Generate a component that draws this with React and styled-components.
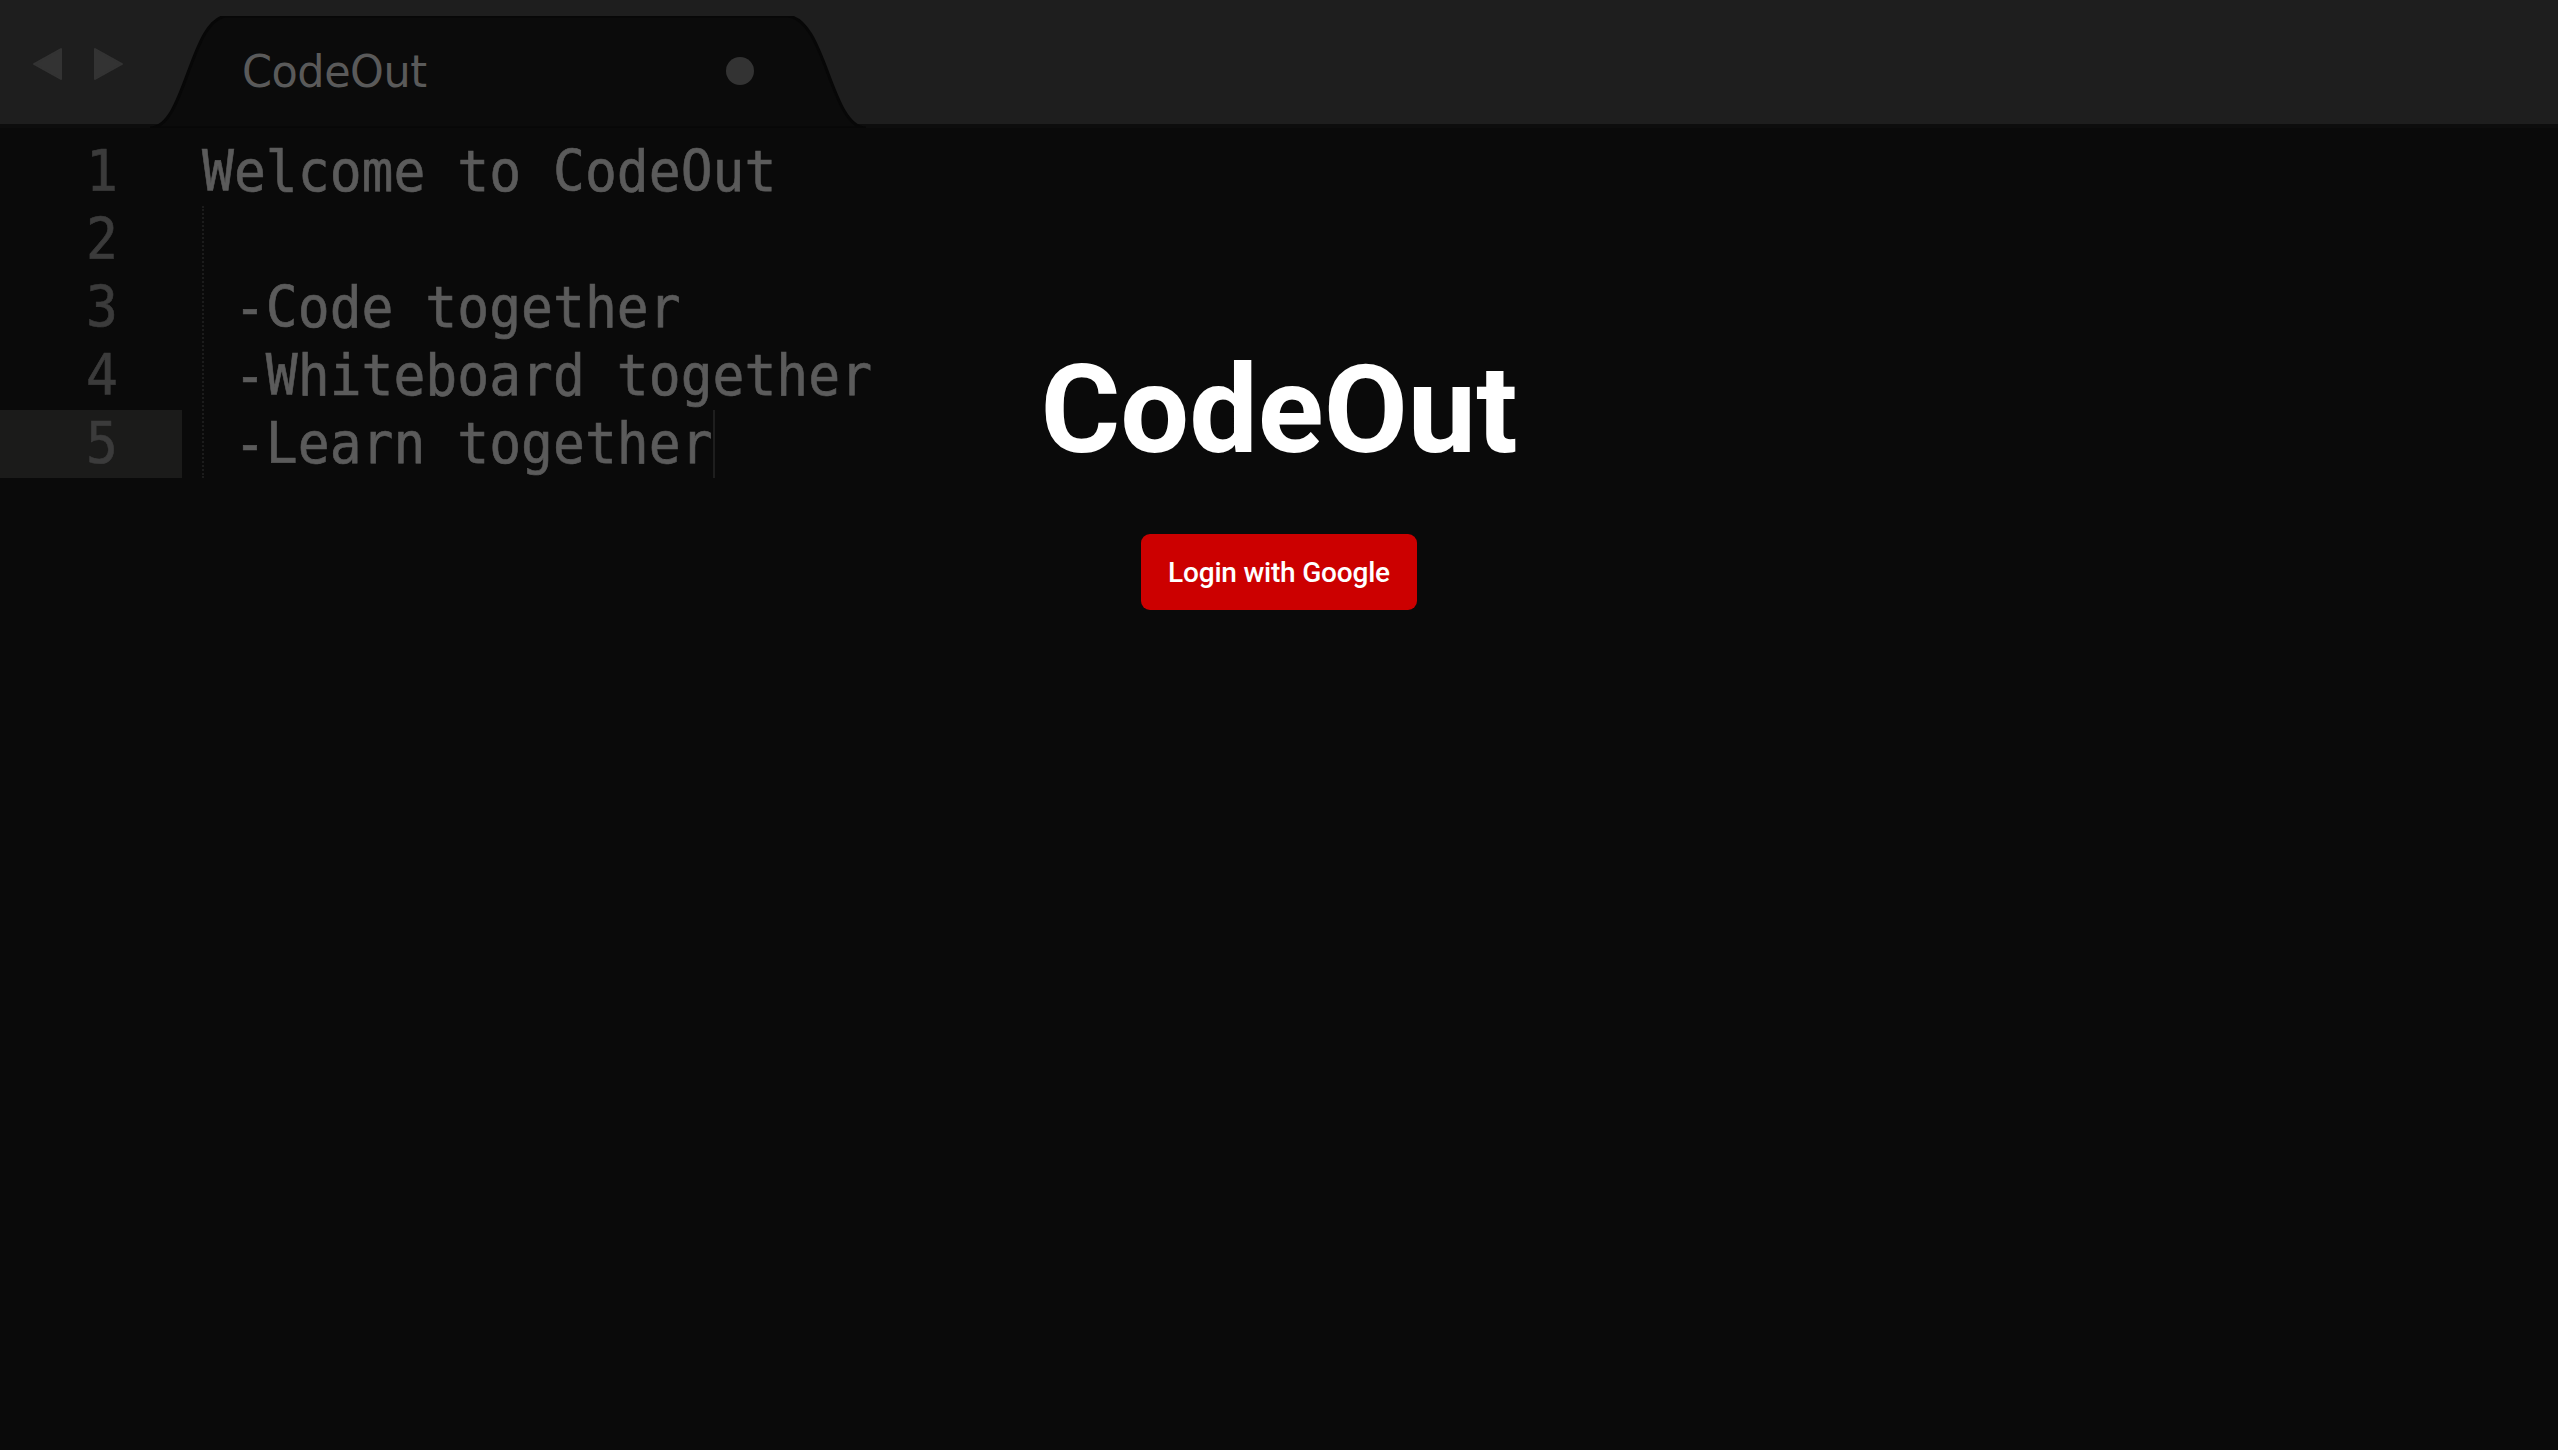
import styled, { createGlobalStyle } from 'styled-components';

const lines = ['Welcome to CodeOut', '', ' -Code together', ' -Whiteboard together', ' -Learn together'];

const GlobalStyle = createGlobalStyle`
  html, body {
    margin: 0;
    padding: 0;
    background: #0a0a0a;
  }
  * {
    box-sizing: border-box;
  }
`;

function App() {
  return (
    <Page>
      <GlobalStyle />
      <Editor>
        <TabBar>
          <Arrows>
            <svg width="30" height="34" viewBox="0 0 30 34">
              <path d="M29 2 L29 32 L2 17 Z" fill="#333" stroke="#333" strokeWidth="2" strokeLinejoin="round" />
            </svg>
            <svg width="30" height="34" viewBox="0 0 30 34">
              <path d="M1 2 L1 32 L28 17 Z" fill="#333" stroke="#333" strokeWidth="2" strokeLinejoin="round" />
            </svg>
          </Arrows>
          <Tab>
            <TabShape width="716" height="112" viewBox="0 0 716 112">
              <path
                d="M0 112 C 36 112, 40 0, 78 0 L 636 0 C 676 0, 680 112, 716 112 Z"
                fill="#0b0b0b"
                stroke="#070707"
                strokeWidth="3"
              />
            </TabShape>
            <TabTitle>CodeOut</TabTitle>
            <TabDot />
          </Tab>
        </TabBar>
        <Body>
          <Gutter>
            {lines.map((_, i) => (
              <LineNumber key={i} active={i === lines.length - 1}>
                <Glyphs>{i + 1}</Glyphs>
              </LineNumber>
            ))}
          </Gutter>
          <Code>
            <IndentGuide />
            {lines.map((line, i) => (
              <CodeLine key={i}>
                <Glyphs>{line}</Glyphs>
                {i === lines.length - 1 ? <Cursor /> : null}
              </CodeLine>
            ))}
          </Code>
        </Body>
      </Editor>
      <Overlay>
        <Title>CodeOut</Title>
        <LoginBtn>Login with Google</LoginBtn>
      </Overlay>
    </Page>
  );
}

const Page = styled.div`
  position: relative;
  width: 100%;
  height: 1450px;
  overflow: hidden;
  background: #0a0a0a;
`;

const Editor = styled.div`
  display: flex;
  flex-direction: column;
  height: 100%;
`;

const TabBar = styled.div`
  height: 128px;
  background: #1e1e1e;
  border-bottom: 4px solid #0d0d0d;
  display: flex;
  align-items: flex-end;
  padding-left: 32px;
`;

const Arrows = styled.div`
  display: flex;
  gap: 32px;
  align-self: flex-start;
  margin-top: 47px;
`;

const Tab = styled.div`
  position: relative;
  width: 716px;
  height: 112px;
  margin-left: 26px;
  margin-bottom: -4px;
  display: flex;
  align-items: center;
  padding: 0 0 2px 92px;
`;

const TabShape = styled.svg`
  position: absolute;
  left: 0;
  top: 0;
  z-index: 0;
`;

const TabTitle = styled.div`
  position: relative;
  z-index: 1;
  font-family: 'DejaVu Sans', sans-serif;
  font-size: 43px;
  color: #5a5a5a;
  letter-spacing: -0.5px;
  transform: scaleY(1.05);
`;

const TabDot = styled.div`
  position: relative;
  z-index: 1;
  width: 28px;
  height: 28px;
  border-radius: 50%;
  background: #333;
  margin-left: auto;
  margin-right: 112px;
`;

const Body = styled.div`
  display: flex;
  padding-top: 10px;
  font-family: 'DejaVu Sans Mono', monospace;
  font-size: 53px;
  line-height: 68px;
`;

const Glyphs = styled.span`
  display: inline-block;
  transform: scaleY(1.09);
  transform-origin: 50% 60%;
  -webkit-text-stroke: 0.6px currentColor;
`;

const Gutter = styled.div`
  width: 182px;
  display: flex;
  flex-direction: column;
`;

const LineNumber = styled.div`
  height: 68px;
  text-align: right;
  padding-right: 64px;
  color: #3b3b3b;
  background: ${(props) => (props.active ? '#1b1b1a' : 'transparent')};
`;

const Code = styled.div`
  position: relative;
  padding-left: 20px;
  display: flex;
  flex-direction: column;
`;

const IndentGuide = styled.div`
  position: absolute;
  left: 20px;
  top: 68px;
  height: 272px;
  border-left: 2px dotted #1c1c1c;
`;

const CodeLine = styled.div`
  height: 68px;
  white-space: pre;
  color: #5b5b5b;
  display: flex;
  align-items: stretch;
`;

const Cursor = styled.span`
  width: 2px;
  background: #1e1e1e;
`;

const Overlay = styled.div`
  position: absolute;
  inset: 0;
  display: flex;
  flex-direction: column;
  align-items: center;
  padding-top: 350px;
`;

const Title = styled.h1`
  margin: 0;
  font-family: Roboto, 'Liberation Sans', sans-serif;
  font-weight: 700;
  font-size: 122px;
  line-height: 122px;
  color: #ffffff;
  margin-bottom: 62px;
`;

const LoginBtn = styled.button`
  width: 276px;
  height: 76px;
  background: #cc0000;
  color: #ffffff;
  border: none;
  border-radius: 9px;
  font-family: Roboto, 'Liberation Sans', sans-serif;
  font-weight: 500;
  font-size: 28px;
  letter-spacing: -0.2px;
  cursor: pointer;
`;

export default App;
